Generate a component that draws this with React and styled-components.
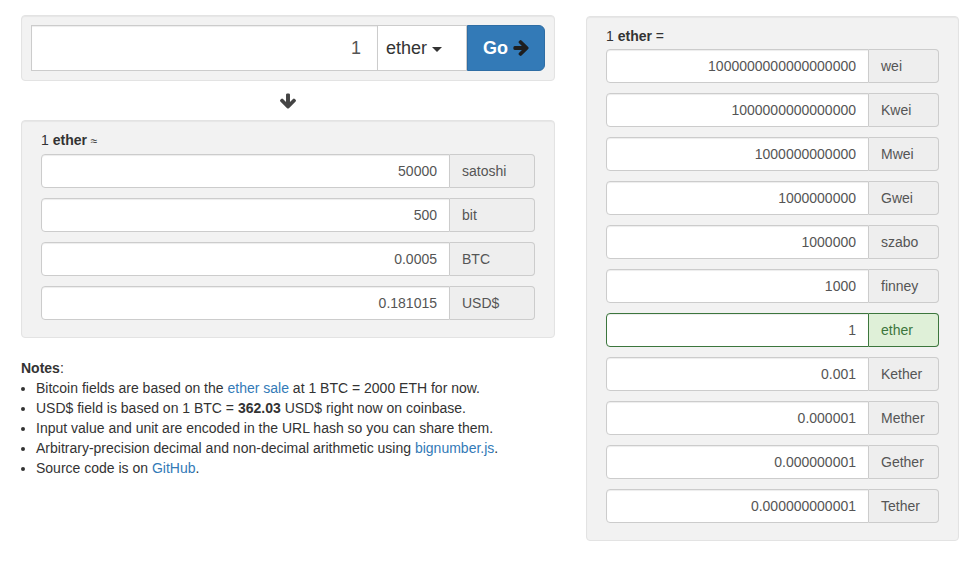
import React from 'react';
import styled, { createGlobalStyle } from 'styled-components';

const Global = createGlobalStyle`
  html, body { margin: 0; padding: 0; background: #fff; }
  body {
    font-family: "Liberation Sans", Arial, Helvetica, sans-serif;
    font-size: 14px;
    line-height: 20px;
    color: #333;
  }
  * { box-sizing: border-box; }
`;

const Page = styled.div`
  display: grid;
  grid-template-columns: 534px 373px;
  column-gap: 31px;
  align-items: start;
  padding: 15px 9px 0 21px;
`;

const Column = styled.div`
  display: flex;
  flex-direction: column;
  margin-top: ${p => p.$offset || 0}px;
`;

const Well = styled.div`
  background: #f2f2f2;
  border: 1px solid #e3e3e3;
  border-radius: 4px;
  box-shadow: inset 0 1px 1px rgba(0, 0, 0, 0.05);
  padding: ${p => (p.$compact ? '9px' : '9px 19px 7px')};
`;

const BigGroup = styled.div`
  display: flex;
  height: 46px;
`;

const BigInput = styled.input`
  flex: 1;
  min-width: 0;
  height: 46px;
  border: 1px solid #ccc;
  border-radius: 0;
  padding: 10px 16px;
  font-family: "Liberation Sans", Arial, sans-serif;
  font-size: 18px;
  color: #555;
  text-align: right;
  box-shadow: inset 0 1px 1px rgba(0, 0, 0, 0.075);
  outline: none;
`;

const Dropdown = styled.div`
  flex: none;
  width: 89px;
  display: flex;
  align-items: center;
  gap: 5px;
  padding-left: 8px;
  border: 1px solid #ccc;
  border-left: 0;
  background: #fff;
  font-size: 18px;
  color: #333;
`;

const Caret = styled.span`
  display: inline-block;
  width: 0;
  height: 0;
  border-top: 5px solid #333;
  border-left: 5px solid transparent;
  border-right: 5px solid transparent;
  margin-top: 2px;
`;

const GoButton = styled.div`
  flex: none;
  width: 78px;
  display: flex;
  align-items: center;
  justify-content: center;
  gap: 5px;
  background: #337ab7;
  border: 1px solid #2e6da4;
  border-radius: 0 6px 6px 0;
  color: #fff;
  font-size: 18px;
  font-weight: bold;
`;

const ArrowSvg = styled.svg`
  display: block;
  width: ${p => p.$size}px;
  height: ${p => p.$size}px;
  fill: ${p => p.$color};
  transform: ${p => (p.$right ? 'rotate(-90deg)' : 'none')};
`;

function Arrow({ size, color, right }) {
  return (
    <ArrowSvg viewBox="117 120 1558 1500" $size={size} $color={color} $right={right}>
      <path d="M1675 832q0 53-37 90l-651 652q-39 37-91 37-53 0-90-37l-651-652q-38-36-38-90 0-53 38-91l74-75q39-37 91-37 53 0 90 37l294 294v-704q0-52 38-90t90-38h128q52 0 90 38t38 90v704l294-294q37-37 90-37 52 0 91 37l75 75q37 39 37 91z" />
    </ArrowSvg>
  );
}

const ArrowRow = styled.div`
  height: 39px;
  display: flex;
  align-items: center;
  justify-content: center;
`;

const Caption = styled.div`
  line-height: 20px;
  margin-bottom: 3px;
  color: #333;
  b { font-weight: bold; }
`;

const Approx = styled.span`
  font-size: 12px;
`;

const Row = styled.div`
  display: flex;
  height: 34px;
  margin-bottom: 10px;
`;

const Field = styled.input`
  flex: 1;
  min-width: 0;
  height: 34px;
  border: 1px solid ${p => (p.$success ? '#3c763d' : '#ccc')};
  border-radius: 4px 0 0 4px;
  padding: 6px 12px;
  font-family: "Liberation Sans", Arial, sans-serif;
  font-size: 14px;
  color: #555;
  text-align: right;
  background: #fff;
  box-shadow: inset 0 1px 1px rgba(0, 0, 0, 0.075);
  outline: none;
`;

const Addon = styled.span`
  flex: none;
  width: ${p => p.$w}px;
  height: 34px;
  border: 1px solid ${p => (p.$success ? '#3c763d' : '#ccc')};
  border-left: 0;
  border-radius: 0 4px 4px 0;
  background: ${p => (p.$success ? '#dff0d8' : '#eee')};
  color: ${p => (p.$success ? '#3c763d' : '#555')};
  padding: 6px 12px;
  line-height: 20px;
  font-size: 14px;
`;

const Notes = styled.div`
  margin-top: 20px;
  line-height: 20px;
`;

const List = styled.ul`
  margin: 0;
  padding-left: 15px;
`;

const Link = styled.a`
  color: #337ab7;
  text-decoration: none;
`;

const btcRows = [
  ['50000', 'satoshi'],
  ['500', 'bit'],
  ['0.0005', 'BTC'],
  ['0.181015', 'USD$'],
];

const etherRows = [
  ['1000000000000000000', 'wei'],
  ['1000000000000000', 'Kwei'],
  ['1000000000000', 'Mwei'],
  ['1000000000', 'Gwei'],
  ['1000000', 'szabo'],
  ['1000', 'finney'],
  ['1', 'ether', true],
  ['0.001', 'Kether'],
  ['0.000001', 'Mether'],
  ['0.000000001', 'Gether'],
  ['0.000000000001', 'Tether'],
];

function UnitRow({ value, unit, width, success }) {
  return (
    <Row>
      <Field readOnly value={value} $success={success} />
      <Addon $w={width} $success={success}>{unit}</Addon>
    </Row>
  );
}

export default function App() {
  return (
    <>
      <Global />
      <Page>
        <Column>
          <Well $compact>
            <BigGroup>
              <BigInput readOnly value="1" />
              <Dropdown>
                ether <Caret />
              </Dropdown>
              <GoButton>
                Go <Arrow size={16} color="#1e1e1e" right />
              </GoButton>
            </BigGroup>
          </Well>
          <ArrowRow>
            <Arrow size={16} color="#444" />
          </ArrowRow>
          <Well>
            <Caption>
              1 <b>ether</b> <Approx>≈</Approx>
            </Caption>
            {btcRows.map(([v, u]) => (
              <UnitRow key={u} value={v} unit={u} width={85} />
            ))}
          </Well>
          <Notes>
            <div>
              <b>Notes</b>:
            </div>
            <List>
              <li>
                Bitcoin fields are based on the <Link href="#">ether sale</Link> at 1 BTC = 2000 ETH for now.
              </li>
              <li>
                USD$ field is based on 1 BTC = <b>362.03</b> USD$ right now on coinbase.
              </li>
              <li>Input value and unit are encoded in the URL hash so you can share them.</li>
              <li>
                Arbitrary-precision decimal and non-decimal arithmetic using <Link href="#">bignumber.js</Link>.
              </li>
              <li>
                Source code is on <Link href="#">GitHub</Link>.
              </li>
            </List>
          </Notes>
        </Column>
        <Column $offset={1}>
          <Well>
            <Caption>
              1 <b>ether</b> =
            </Caption>
            {etherRows.map(([v, u, s]) => (
              <UnitRow key={u} value={v} unit={u} width={70} success={s} />
            ))}
          </Well>
        </Column>
      </Page>
    </>
  );
}
